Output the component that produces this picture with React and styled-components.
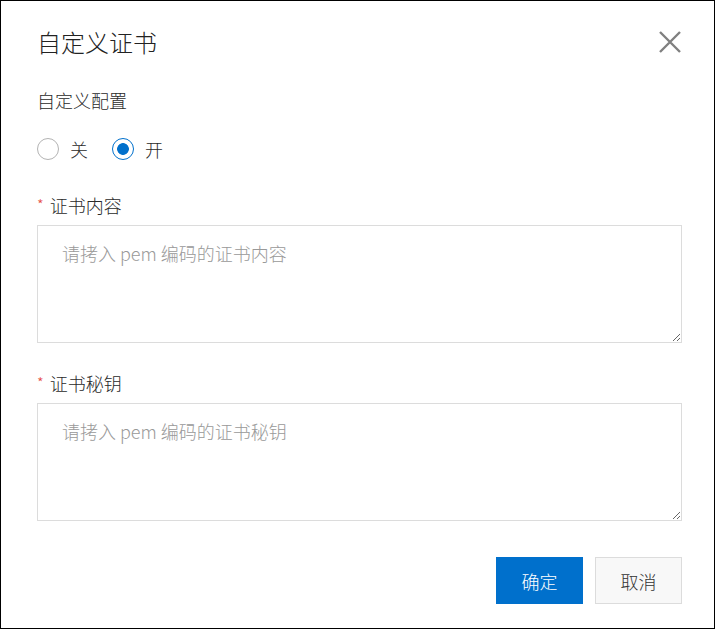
import React, { useState } from 'react';
import styled, { createGlobalStyle } from 'styled-components';

const Global = createGlobalStyle`
  html, body {
    margin: 0;
    padding: 0;
    background: #fff;
  }
  * { box-sizing: border-box; }
`;

const Dialog = styled.div`
  width: 715px;
  height: 629px;
  border: 1px solid #000;
  background: #fff;
  padding: 25px 33px 0 36px;
  font-family: "Noto Sans CJK SC", "Noto Sans", sans-serif;
  font-weight: 300;
  color: #333;
  display: flex;
  flex-direction: column;
`;

const Header = styled.div`
  display: flex;
  justify-content: space-between;
  align-items: center;
  height: 32px;
`;

const Title = styled.h2`
  margin: 0;
  font-size: 24px;
  font-weight: 300;
  line-height: 32px;
  color: #222;
`;

const CloseBtn = styled.button`
  width: 24px;
  height: 24px;
  padding: 0;
  margin-right: -1px;
  border: none;
  background: none;
  display: flex;
  align-items: center;
  justify-content: center;
  cursor: pointer;
`;

const Label = styled.div`
  font-size: 18px;
  line-height: 24px;
  color: #2a2a2a;
  margin-top: ${p => p.$top || 0}px;
`;

const Star = styled.span`
  color: #e5483f;
  font-size: 15px;
  margin-right: 6px;
  vertical-align: 2px;
`;

const RadioRow = styled.div`
  display: flex;
  align-items: center;
  gap: 24px;
  margin-top: 26px;
  height: 22px;
`;

const RadioItem = styled.label`
  display: flex;
  align-items: center;
  gap: 11px;
  font-size: 18px;
  line-height: 22px;
  color: #2a2a2a;
  cursor: pointer;
`;

const Radio = styled.input.attrs({ type: 'radio' })`
  appearance: none;
  margin: 0;
  width: 22px;
  height: 22px;
  border-radius: 50%;
  border: 1px solid #b3b3b3;
  background: #fff;
  &:checked {
    border-color: #0070cc;
    background: radial-gradient(circle, #0070cc 5.5px, #fff 6.2px);
  }
`;

const TextArea = styled.textarea`
  display: block;
  width: 645px;
  height: 118px;
  margin-top: 8px;
  padding: 14px 24px;
  border: 1px solid #dcdcdc;
  border-radius: 0;
  font-family: "Noto Sans CJK SC", "Noto Sans", sans-serif;
  font-weight: 300;
  font-size: 18px;
  line-height: 26px;
  color: #333;
  resize: vertical;
  outline: none;
  &::placeholder { color: #999; }
`;

const Footer = styled.div`
  display: flex;
  justify-content: flex-end;
  gap: 12px;
  margin-top: 36px;
  width: 645px;
`;

const Button = styled.button`
  width: 87px;
  height: 47px;
  font-family: "Noto Sans CJK SC", "Noto Sans", sans-serif;
  font-weight: 300;
  font-size: 18px;
  border: 1px solid ${p => (p.$primary ? '#0070cc' : '#dcdcdc')};
  background: ${p => (p.$primary ? '#0070cc' : '#f8f8f8')};
  color: ${p => (p.$primary ? '#fff' : '#333')};
  cursor: pointer;
`;

export default function App() {
  const [custom, setCustom] = useState('on');
  return (
    <>
      <Global />
      <Dialog>
        <Header>
          <Title>自定义证书</Title>
          <CloseBtn aria-label="关闭">
            <svg width="22" height="22" viewBox="0 0 22 22">
              <path d="M1 1 L21 21 M21 1 L1 21" stroke="#808080" strokeWidth="2.4" />
            </svg>
          </CloseBtn>
        </Header>

        <Label $top={30}>自定义配置</Label>
        <RadioRow>
          <RadioItem>
            <Radio name="custom" checked={custom === 'off'} onChange={() => setCustom('off')} />
            关
          </RadioItem>
          <RadioItem>
            <Radio name="custom" checked={custom === 'on'} onChange={() => setCustom('on')} />
            开
          </RadioItem>
        </RadioRow>

        <Label $top={33}><Star>*</Star>证书内容</Label>
        <TextArea placeholder="请拷入 pem 编码的证书内容" />

        <Label $top={28}><Star>*</Star>证书秘钥</Label>
        <TextArea placeholder="请拷入 pem 编码的证书秘钥" />

        <Footer>
          <Button $primary>确定</Button>
          <Button>取消</Button>
        </Footer>
      </Dialog>
    </>
  );
}
